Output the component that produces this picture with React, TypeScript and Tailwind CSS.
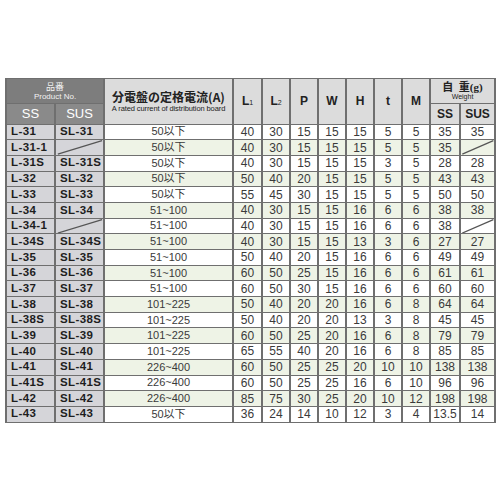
import React from "react";

type Row = [string, string | null, string, ...(string | number | null)[]];

const rows: Row[] = [
  ["L-31", "SL-31", "50以下", 40, 30, 15, 15, 15, 5, 5, 35, 35],
  ["L-31-1", null, "50以下", 40, 30, 15, 15, 15, 5, 5, 35, null],
  ["L-31S", "SL-31S", "50以下", 40, 30, 15, 15, 15, 3, 5, 28, 28],
  ["L-32", "SL-32", "50以下", 50, 40, 20, 15, 15, 5, 5, 43, 43],
  ["L-33", "SL-33", "50以下", 55, 45, 30, 15, 15, 5, 5, 50, 50],
  ["L-34", "SL-34", "51~100", 40, 30, 15, 15, 16, 6, 6, 38, 38],
  ["L-34-1", null, "51~100", 40, 30, 15, 15, 16, 6, 6, 38, null],
  ["L-34S", "SL-34S", "51~100", 40, 30, 15, 15, 13, 3, 6, 27, 27],
  ["L-35", "SL-35", "51~100", 50, 40, 20, 15, 16, 6, 6, 49, 49],
  ["L-36", "SL-36", "51~100", 60, 50, 25, 15, 16, 6, 6, 61, 61],
  ["L-37", "SL-37", "51~100", 60, 50, 30, 15, 16, 6, 6, 60, 60],
  ["L-38", "SL-38", "101~225", 50, 40, 20, 20, 16, 6, 8, 64, 64],
  ["L-38S", "SL-38S", "101~225", 50, 40, 20, 20, 13, 3, 8, 45, 45],
  ["L-39", "SL-39", "101~225", 60, 50, 25, 20, 16, 6, 8, 79, 79],
  ["L-40", "SL-40", "101~225", 65, 55, 40, 20, 16, 6, 8, 85, 85],
  ["L-41", "SL-41", "226~400", 60, 50, 25, 25, 20, 10, 10, 138, 138],
  ["L-41S", "SL-41S", "226~400", 60, 50, 25, 25, 16, 6, 10, 96, 96],
  ["L-42", "SL-42", "226~400", 85, 75, 30, 25, 20, 10, 12, 198, 198],
  ["L-43", "SL-43", "50以下", 36, 24, 14, 10, 12, 3, 4, "13.5", 14],
];

const widths = [49, 49, 129, 29, 28, 28, 28, 28, 28, 28, 30, 35];

const cellB = "border-x-2 border-y border-[#6f6f6f]";

function Slash() {
  return (
    <svg className="absolute inset-0 w-full h-full" preserveAspectRatio="none" viewBox="0 0 100 100">
      <line x1="4" y1="96" x2="98" y2="4" stroke="#555" strokeWidth="1.2" vectorEffect="non-scaling-stroke" />
    </svg>
  );
}

export default function App() {
  return (
    <div className="w-[500px] h-[500px] bg-white pt-[78px] pl-[5px]" style={{ fontFamily: '"Liberation Sans", Arial, "Noto Sans CJK JP", sans-serif' }}>
      <table className="table-fixed border-collapse w-[489px]">
        <colgroup>
          {widths.map((w, i) => (
            <col key={i} style={{ width: w }} />
          ))}
        </colgroup>
        <thead>
          <tr className="h-[25px]">
            <th colSpan={2} className={`${cellB} bg-[#7d7d7d] text-[#f2f2f2] font-normal leading-none p-0`}>
              <div className="text-[9px] leading-[10px] font-normal" style={{ fontFamily: '"Noto Sans CJK JP", sans-serif' }}>品番</div>
              <div className="text-[8px] leading-[9px]">Product No.</div>
            </th>
            <th rowSpan={2} className={`${cellB} bg-[#dcdcdc] p-0 text-[#222]`}>
              <div className="text-[12px] leading-[14px] font-bold" style={{ fontFamily: '"Noto Sans CJK JP", sans-serif' }}>分電盤の定格電流(A)</div>
              <div className="text-[7.5px] leading-[9px] font-normal whitespace-nowrap tracking-[-0.1px]">A rated current of distribution board</div>
            </th>
            {["1", "2"].map((s) => (
              <th key={s} rowSpan={2} className={`${cellB} bg-[#dcdcdc] text-[#222] text-[12px] font-bold p-0`}>
                L<span className="text-[7px] font-normal">{s}</span>
              </th>
            ))}
            {["P", "W", "H", "t", "M"].map((s) => (
              <th key={s} rowSpan={2} className={`${cellB} bg-[#dcdcdc] text-[#222] text-[12px] font-bold p-0`}>
                {s}
              </th>
            ))}
            <th colSpan={2} className={`${cellB} bg-[#dcdcdc] text-[#222] p-0 leading-none`}>
              <div className="text-[11px] leading-[12px] font-bold" style={{ fontFamily: '"Liberation Serif", "Noto Sans CJK JP", serif' }}>
                自&nbsp;&nbsp;重(g)
              </div>
              <div className="text-[7px] leading-[8px] font-normal">Weight</div>
            </th>
          </tr>
          <tr className="h-[17px]">
            <th className={`${cellB} bg-[#8a8a8a] text-white text-[13px] font-normal p-0`}>SS</th>
            <th className={`${cellB} bg-[#8a8a8a] text-white text-[13px] font-normal p-0`}>SUS</th>
            <th className={`${cellB} bg-[#dcdcdc] text-[#222] text-[12px] font-bold p-0`}>SS</th>
            <th className={`${cellB} bg-[#dcdcdc] text-[#222] text-[12px] font-bold p-0`}>SUS</th>
          </tr>
        </thead>
        <tbody>
          {rows.map((r, i) => {
            const bg = i % 2 === 0 ? "bg-white" : "bg-[#eef3e6]";
            const [ss, sus, cur, ...nums] = r;
            return (
              <tr key={i} className="h-[15.7px]">
                <td className={`${cellB} bg-[#d5d5d9] text-[11.5px] font-bold text-[#1e1e1e] tracking-[0.4px] pl-[4px] p-0 leading-none whitespace-nowrap overflow-hidden`}>{ss}</td>
                <td className={`${cellB} bg-[#d5d5d9] text-[11.5px] font-bold text-[#1e1e1e] tracking-[0.4px] pl-[4px] p-0 leading-none relative whitespace-nowrap overflow-hidden`}>
                  {sus ?? <Slash />}
                </td>
                <td className={`${cellB} ${bg} text-center text-[11px] text-[#3a3a3a] p-0 leading-none`} style={{ fontFamily: '"Liberation Sans", "Noto Sans CJK JP", sans-serif' }}>
                  {cur}
                </td>
                {nums.map((n, j) => (
                  <td key={j} className={`${cellB} ${bg} text-center text-[12px] text-[#3a3a3a] p-0 leading-none relative`}>
                    {n === null ? <Slash /> : n}
                  </td>
                ))}
              </tr>
            );
          })}
        </tbody>
      </table>
    </div>
  );
}
